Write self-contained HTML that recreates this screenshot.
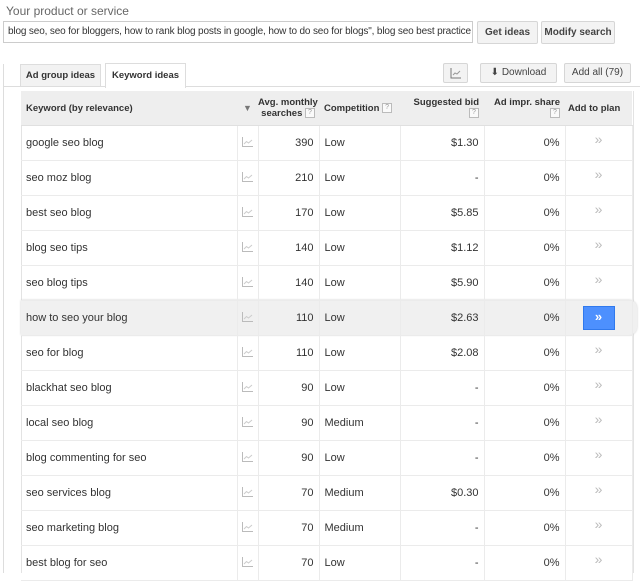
<!DOCTYPE html><html><head><style>
body{margin:0;width:640px;height:573px;overflow:hidden;background:#fff;font-family:"Liberation Sans",Arial,sans-serif;font-size:11px;color:#333;position:relative}
.a{position:absolute}
.btn{position:absolute;background:#f3f3f3;border:1px solid #d6d6d6;border-radius:2px;font-weight:bold;font-size:10px;color:#444;text-align:center;box-sizing:border-box;white-space:nowrap}
table{position:absolute;left:21px;top:91px;width:611px;border-collapse:collapse;table-layout:fixed}
td{height:34px;border-bottom:1px solid #ebebeb;border-right:1px solid #ebebeb;padding:0 5px;white-space:nowrap;font-size:11px;line-height:12px}
th{height:34px;background:#eee;font-size:9.5px;font-weight:bold;color:#333;padding:0 5px;border-bottom:1px solid #e0e0e0;white-space:nowrap;line-height:11px;overflow:hidden}
.r{text-align:right}
.q{display:inline-block;width:8px;height:8px;border:1px solid #bbb;font-size:7px;line-height:8px;text-align:center;color:#999;font-weight:normal;background:#fafafa;vertical-align:middle}
.ar{color:#bbb;font-size:14px;text-align:center;vertical-align:top;padding-top:7px;height:27px}
.ic{text-align:center;padding:0}
</style></head><body>
<div class="a" style="left:6px;top:4px;font-size:12px;color:#666">Your product or service</div>
<div class="a" style="left:3px;top:21px;width:470px;height:22px;border:1px solid #ccc;box-sizing:border-box;font-size:10px;line-height:20px;padding-left:4px;white-space:nowrap;overflow:hidden;letter-spacing:-0.15px">blog seo, seo for bloggers, how to rank blog posts in google, how to do seo for blogs", blog seo best practice</div>
<div class="btn" style="left:477px;top:21px;width:61px;height:23px;line-height:21px">Get ideas</div>
<div class="btn" style="left:541px;top:21px;width:74px;height:23px;line-height:21px">Modify search</div>
<div class="a" style="left:3px;top:64px;width:1px;height:509px;background:#ddd"></div>
<div class="a" style="left:4px;top:86px;width:636px;height:1px;background:#ddd"></div>
<div class="a" style="left:20px;top:64px;width:81px;height:23px;background:#f2f2f2;border:1px solid #ddd;box-sizing:border-box;font-size:9.5px;font-weight:bold;line-height:22px;text-align:center;white-space:nowrap">Ad group ideas</div>
<div class="a" style="left:105px;top:63px;width:81px;height:25px;background:#fff;border:1px solid #ddd;border-bottom:none;box-sizing:border-box;font-size:9.5px;font-weight:bold;line-height:24px;text-align:center;white-space:nowrap">Keyword ideas</div>
<div class="btn" style="left:443px;top:63px;width:25px;height:20px"><svg width="12" height="12" style="margin-top:3px" viewBox="0 0 12 12"><path d="M1 1V11H11" stroke="#777" fill="none"/><path d="M3 8L5 6L7 7L10 4" stroke="#999" fill="none"/></svg></div>
<div class="btn" style="left:480px;top:63px;width:77px;height:20px;line-height:18px;font-weight:normal;font-size:10px">⬇ Download</div>
<div class="btn" style="left:564px;top:63px;width:67px;height:20px;line-height:18px;font-weight:normal;font-size:10px">Add all (79)</div>
<div class="a" style="left:21px;top:91px;width:611px;height:482px;border-left:1px solid #e3e3e3;border-right:1px solid #e3e3e3"></div>
<div class="a" style="left:21px;top:300px;width:616px;height:35px;background:#f0f0f0;border-radius:0 8px 8px 0;box-shadow:0 0 2px #ccc"></div>
<table>
<colgroup><col style="width:216px"><col style="width:21px"><col style="width:61px"><col style="width:81px"><col style="width:84px"><col style="width:81px"><col style="width:67px"></colgroup>
<tr><th style="text-align:left">Keyword (by relevance)</th><th style="color:#777;font-size:9px;padding:0">▼</th><th class="r" style="padding:0 4px 0 0">Avg. monthly<br>searches <span class="q">?</span></th><th style="text-align:left">Competition <span class="q">?</span></th><th class="r">Suggested bid<br><span class="q">?</span></th><th class="r">Ad impr. share<br><span class="q">?</span></th><th style="text-align:left;padding:0 3px">Add to plan</th></tr>
<tr><td>google seo blog</td><td class="ic"><svg width="11" height="10" viewBox="0 0 11 10"><path d="M.5 0V9.5H11" stroke="#bbb" fill="none"/><path d="M2 7L4.5 4.5L6.5 6L10 3" stroke="#ccc" fill="none"/></svg></td><td class="r">390</td><td>Low</td><td class="r">$1.30</td><td class="r">0%</td><td class="ar">»</td></tr>
<tr><td>seo moz blog</td><td class="ic"><svg width="11" height="10" viewBox="0 0 11 10"><path d="M.5 0V9.5H11" stroke="#bbb" fill="none"/><path d="M2 7L4.5 4.5L6.5 6L10 3" stroke="#ccc" fill="none"/></svg></td><td class="r">210</td><td>Low</td><td class="r">-</td><td class="r">0%</td><td class="ar">»</td></tr>
<tr><td>best seo blog</td><td class="ic"><svg width="11" height="10" viewBox="0 0 11 10"><path d="M.5 0V9.5H11" stroke="#bbb" fill="none"/><path d="M2 7L4.5 4.5L6.5 6L10 3" stroke="#ccc" fill="none"/></svg></td><td class="r">170</td><td>Low</td><td class="r">$5.85</td><td class="r">0%</td><td class="ar">»</td></tr>
<tr><td>blog seo tips</td><td class="ic"><svg width="11" height="10" viewBox="0 0 11 10"><path d="M.5 0V9.5H11" stroke="#bbb" fill="none"/><path d="M2 7L4.5 4.5L6.5 6L10 3" stroke="#ccc" fill="none"/></svg></td><td class="r">140</td><td>Low</td><td class="r">$1.12</td><td class="r">0%</td><td class="ar">»</td></tr>
<tr><td>seo blog tips</td><td class="ic"><svg width="11" height="10" viewBox="0 0 11 10"><path d="M.5 0V9.5H11" stroke="#bbb" fill="none"/><path d="M2 7L4.5 4.5L6.5 6L10 3" stroke="#ccc" fill="none"/></svg></td><td class="r">140</td><td>Low</td><td class="r">$5.90</td><td class="r">0%</td><td class="ar">»</td></tr>
<tr><td>how to seo your blog</td><td class="ic"><svg width="11" height="10" viewBox="0 0 11 10"><path d="M.5 0V9.5H11" stroke="#bbb" fill="none"/><path d="M2 7L4.5 4.5L6.5 6L10 3" stroke="#ccc" fill="none"/></svg></td><td class="r">110</td><td>Low</td><td class="r">$2.63</td><td class="r">0%</td><td style="text-align:center"><span style="display:inline-block;width:30px;height:22px;background:#4d90fe;border:1px solid #3079ed;color:#fff;font-size:13px;line-height:20px;font-weight:bold">»</span></td></tr>
<tr><td>seo for blog</td><td class="ic"><svg width="11" height="10" viewBox="0 0 11 10"><path d="M.5 0V9.5H11" stroke="#bbb" fill="none"/><path d="M2 7L4.5 4.5L6.5 6L10 3" stroke="#ccc" fill="none"/></svg></td><td class="r">110</td><td>Low</td><td class="r">$2.08</td><td class="r">0%</td><td class="ar">»</td></tr>
<tr><td>blackhat seo blog</td><td class="ic"><svg width="11" height="10" viewBox="0 0 11 10"><path d="M.5 0V9.5H11" stroke="#bbb" fill="none"/><path d="M2 7L4.5 4.5L6.5 6L10 3" stroke="#ccc" fill="none"/></svg></td><td class="r">90</td><td>Low</td><td class="r">-</td><td class="r">0%</td><td class="ar">»</td></tr>
<tr><td>local seo blog</td><td class="ic"><svg width="11" height="10" viewBox="0 0 11 10"><path d="M.5 0V9.5H11" stroke="#bbb" fill="none"/><path d="M2 7L4.5 4.5L6.5 6L10 3" stroke="#ccc" fill="none"/></svg></td><td class="r">90</td><td>Medium</td><td class="r">-</td><td class="r">0%</td><td class="ar">»</td></tr>
<tr><td>blog commenting for seo</td><td class="ic"><svg width="11" height="10" viewBox="0 0 11 10"><path d="M.5 0V9.5H11" stroke="#bbb" fill="none"/><path d="M2 7L4.5 4.5L6.5 6L10 3" stroke="#ccc" fill="none"/></svg></td><td class="r">90</td><td>Low</td><td class="r">-</td><td class="r">0%</td><td class="ar">»</td></tr>
<tr><td>seo services blog</td><td class="ic"><svg width="11" height="10" viewBox="0 0 11 10"><path d="M.5 0V9.5H11" stroke="#bbb" fill="none"/><path d="M2 7L4.5 4.5L6.5 6L10 3" stroke="#ccc" fill="none"/></svg></td><td class="r">70</td><td>Medium</td><td class="r">$0.30</td><td class="r">0%</td><td class="ar">»</td></tr>
<tr><td>seo marketing blog</td><td class="ic"><svg width="11" height="10" viewBox="0 0 11 10"><path d="M.5 0V9.5H11" stroke="#bbb" fill="none"/><path d="M2 7L4.5 4.5L6.5 6L10 3" stroke="#ccc" fill="none"/></svg></td><td class="r">70</td><td>Medium</td><td class="r">-</td><td class="r">0%</td><td class="ar">»</td></tr>
<tr><td>best blog for seo</td><td class="ic"><svg width="11" height="10" viewBox="0 0 11 10"><path d="M.5 0V9.5H11" stroke="#bbb" fill="none"/><path d="M2 7L4.5 4.5L6.5 6L10 3" stroke="#ccc" fill="none"/></svg></td><td class="r">70</td><td>Low</td><td class="r">-</td><td class="r">0%</td><td class="ar">»</td></tr>
</table>
</body></html>
